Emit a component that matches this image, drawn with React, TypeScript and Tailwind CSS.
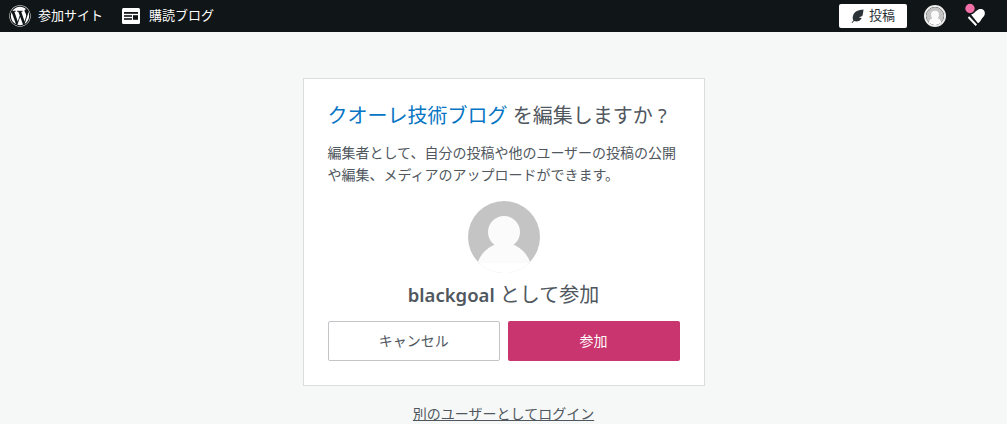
import { FaWordpress } from "react-icons/fa";

const FONT = "font-['Noto_Sans','Noto_Sans_CJK_JP',sans-serif]";

function ReaderIcon() {
  return (
    <svg width="18" height="16" viewBox="0 0 18 16" aria-hidden="true">
      <rect width="18" height="16" rx="1.5" fill="#fff" />
      <rect x="2" y="4" width="14" height="1.8" fill="#101517" />
      <rect x="2" y="7.2" width="8" height="1.6" fill="#101517" />
      <rect x="2" y="10.2" width="8" height="1.6" fill="#101517" />
      <rect x="11" y="7.2" width="5" height="4.6" fill="#101517" />
    </svg>
  );
}

function LeafIcon() {
  return (
    <svg width="13" height="14" viewBox="0 0 13 14" aria-hidden="true">
      <path d="M12.5 .5C7.500 .7 3.500 2.500 2.100 6.400c-.7 2-.4 3.700.3 5L.5 13.500l.8.5 1.800-1.900c2.800 1 6.300 0 7.600-3.200l-2.900-.3 3.500-1.700c.7-1.800.9-4 1.200-6.400z" fill="#2c3338" />
    </svg>
  );
}

function NotificationIcon() {
  return (
    <svg width="30" height="32" viewBox="0 0 30 32" aria-hidden="true">
      <path d="M11 14.500C14.500 13.500 16.500 9.500 20 9c3.500-.5 5.500 2.500 4.700 5.500-.5 2-2.400 3.300-3.400 5-1 1.800-1.800 3-3.300 3.800z" fill="#fff" />
      <path d="M8.500 17 16.300 25.300" stroke="#fff" strokeWidth="2" />
      <circle cx="10" cy="8.500" r="5.300" fill="#f06fa6" stroke="#101517" strokeWidth="1.200" />
    </svg>
  );
}

function GravatarAvatar({ size }: { size: number }) {
  return (
    <svg width={size} height={size} viewBox="0 0 72 72" aria-hidden="true">
      <defs>
        <clipPath id={`clip-${size}`}>
          <circle cx="36" cy="36" r="36" />
        </clipPath>
      </defs>
      <g clipPath={`url(#clip-${size})`}>
        <rect width="72" height="72" fill="#c4c4c4" />
        <circle cx="36" cy="31" r="16" fill="#fbfbfb" />
        <ellipse cx="36" cy="72" rx="28" ry="30" fill="#fbfbfb" />
        <rect y="62" width="72" height="10" fill="#fff" />
      </g>
    </svg>
  );
}

export default function App() {
  return (
    <div className={`h-[424px] overflow-hidden bg-[#f6f7f7] ${FONT}`}>
      <header className="flex h-8 items-center justify-between bg-[#101517] text-[13px] text-white">
        <div className="flex items-center">
          <div className="ml-[9px] flex items-center gap-[7px]">
            <FaWordpress className="size-[22px]" />
            <span>参加サイト</span>
          </div>
          <div className="ml-[19px] flex items-center gap-[9px]">
            <ReaderIcon />
            <span>購読ブログ</span>
          </div>
        </div>
        <div className="flex items-center">
          <button className="flex h-6 w-[68px] items-center justify-center gap-[5px] rounded-[2px] bg-white text-[#2c3338]">
            <LeafIcon />
            <span>投稿</span>
          </button>
          <div className="ml-[17px] size-[22px] overflow-hidden rounded-full border-2 border-[#ececec]">
            <GravatarAvatar size={18} />
          </div>
          <div className="ml-[14px] mr-[17px] flex items-center">
            <NotificationIcon />
          </div>
        </div>
      </header>

      <main className="flex flex-col items-center pt-[46px]">
        <section className="h-[308px] w-[402px] border border-[#dcdcde] bg-white px-6 pt-6">
          <h1 className="text-[20px] leading-[26px] text-[#50575e]">
            <a className="text-[#0675c4]">クオーレ技術ブログ</a> を編集しますか ?
          </h1>
          <p className="mt-[13px] text-[14px] leading-[22px] text-[#50575e]">
            編集者として、自分の投稿や他のユーザーの投稿の公開や編集、メディアのアップロードができます。
          </p>
          <div className="mt-[15px] flex justify-center">
            <GravatarAvatar size={72} />
          </div>
          <p className="mt-[8px] text-center text-[20px] leading-[28px] text-[#50575e]">
            <strong className="text-[18.5px] font-semibold">blackgoal</strong> として参加
          </p>
          <div className="mt-[12px] flex gap-2 pl-[0.5px]">
            <button className="h-10 w-[171.5px] rounded-[2px] border border-[#c3c4c7] bg-white pb-[2px] text-[14px] text-[#50575e]">
              キャンセル
            </button>
            <button className="h-10 flex-1 rounded-[2px] bg-[#c9356e] pb-[2px] text-[14px] text-white">
              参加
            </button>
          </div>
        </section>
        <a className="mt-[18px] text-[14px] leading-5 text-[#50575e] underline">別のユーザーとしてログイン</a>
      </main>
    </div>
  );
}
